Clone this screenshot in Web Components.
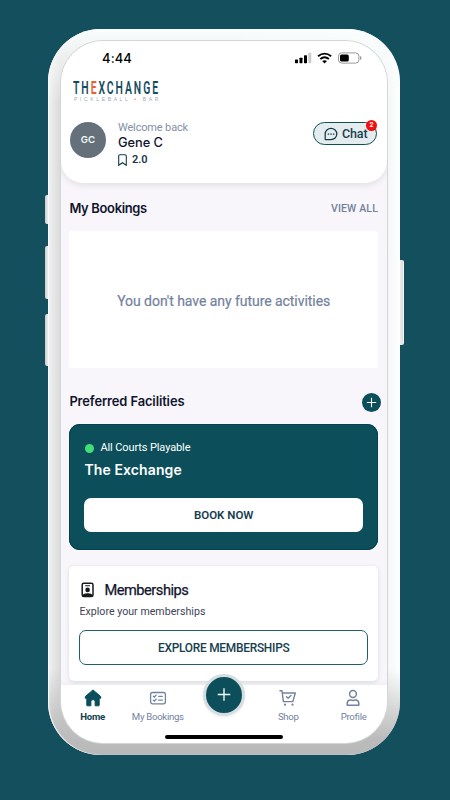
<!DOCTYPE html>
<html lang="en"><head><meta charset="utf-8"><title>The Exchange</title>
<style>
html,body{margin:0;height:100%;overflow:hidden}
body{background:#144f5d;font-family:Roboto,"Liberation Sans",sans-serif;color:#141a35;
--teal:#0c4f5b;--slate:#74819f;--head:Inter,"Open Sans",sans-serif}
</style></head><body>
<phone-frame>
  <app-header></app-header>
  <home-content></home-content>
  <tab-bar></tab-bar>
</phone-frame>
<script>
function define(name, html, after){
  const t=document.createElement('template'); t.innerHTML=html;
  customElements.define(name, class extends HTMLElement{
    connectedCallback(){
      if(this.shadowRoot) return;
      this.attachShadow({mode:'open'}).appendChild(t.content.cloneNode(true));
      if(after) after(this,this.shadowRoot);
    }
  });
}
/* One line of text tracked (or condensed) to a given width */
define('fit-text',`<style>:host{display:block;white-space:nowrap;flex:none}span{display:inline-block;transform-origin:0 50%}</style><span><slot></slot></span>`,(h,r)=>{
  const w=+h.getAttribute('w'), s=r.querySelector('span'), n=h.textContent.length;
  h.style.width=w+'px';
  const m=s.getBoundingClientRect().width;
  if(h.hasAttribute('condense')) s.style.transform='scaleX('+w/m+')';
  else s.style.letterSpacing=((w-m)/n)+'px';
});
define('section-title',`<style>:host{display:flex;align-items:center;justify-content:space-between;height:20px;font:600 12.9px/20px var(--head);color:#11142d}</style><slot></slot><slot name="action"></slot>`);
define('status-bar',`<style>:host{display:flex;justify-content:space-between;align-items:center;height:16px;padding:0 25px 0 41px;color:#000;font:500 13px/16px Inter,sans-serif}svg{display:block}</style>
<fit-text w="30">4:44</fit-text>
<svg width="68" height="14" viewBox="0 0 68 14"><g fill="#000"><rect x="1" y="8.6" width="3" height="3.6" rx=".6"/><rect x="5.5" y="6.7" width="3" height="5.5" rx=".6"/><rect x="10" y="4.3" width="3" height="7.9" rx=".6"/></g><rect x="14.3" y="1.8" width="3" height="10.4" rx=".6" fill="#ccc"/>
<g fill="none" stroke="#000" stroke-width="1.8"><path d="M24 5.3q6.6-5.4 13.2 0M26.3 8q4.3-3.5 8.6 0"/></g><path d="M28.2 10q2.4-1.7 4.8 0l-2.4 2.5z"/>
<rect x="44.5" y="1.9" width="20.4" height="10.2" rx="3.2" fill="none" stroke="#999"/><rect x="46" y="3.4" width="8.8" height="7.2" rx="1.6"/><path d="M66 5v4q1.5-.6 1.5-2T66 5" fill="#999"/></svg>`);
define('brand-logo',`<style>:host{display:block;width:86px;height:25px}
.a{font:600 18px/18px Roboto,sans-serif;letter-spacing:3.4px;color:#144c60;height:17px}.a b{color:#ee5d2b;font-weight:600}.c{font:400 5px/6px "Liberation Sans",sans-serif;color:#9ba7b0;margin-left:1px}.c b{color:#ee8a60}</style>
<fit-text class="a" w="87" condense>TH<b>E</b>XCHANGE</fit-text><fit-text class="c" w="87">PICKLEBALL <b>•</b> BAR</fit-text>`);
define('user-avatar',`<style>:host{width:36px;height:36px;border-radius:50%;background:#65707b;color:#f5f7f8;display:flex;align-items:center;justify-content:center;font:600 9.6px/12px var(--head)}</style><slot></slot>`);
define('chat-button',`<style>:host{box-sizing:border-box;display:flex;align-items:center;gap:4px;width:64px;height:23px;border:1px solid var(--teal);border-radius:12px;background:#e5ecee;padding-left:10px;position:relative;color:#173e51;font:500 12.5px/20px Roboto,sans-serif}i{position:absolute;right:-1px;top:-3.5px;width:11px;height:11px;border-radius:50%;background:#f60d0d;color:#fff;font:700 7px/11px Roboto;text-align:center}svg{flex:none}</style>
<svg width="14" height="14" viewBox="0 0 14 14"><path d="M1.2 12.6V7A5.8 5.6 0 1 1 7 12.6z" fill="none" stroke="#153b4a" stroke-width="1.25" stroke-linejoin="round"/><path d="M3.7 6.4h1.5v1.4H3.7zM6.3 6.4h1.5v1.4H6.3zM8.9 6.4h1.5v1.4H8.9z" fill="#153b4a"/></svg><fit-text w="25.5">Chat</fit-text><i>2</i>`);
define('app-header',`<style>:host{display:block;box-sizing:border-box;height:142px;padding-top:9px;background:#fff;border-radius:0 0 22px 22px;box-shadow:0 2px 7px #0000001a;position:relative;z-index:1;flex:none}
brand-logo{margin:13px 0 0 12px}.row{display:flex;align-items:flex-start;padding:17px 10px 0 9px}user-avatar{margin-top:1px}.who{flex:1;margin-left:12px}chat-button{margin-top:1px}
.w{font-size:11px;line-height:14px;color:#8390a8}.n{font:500 12.8px/16px var(--head);color:#11142d}.r{display:flex;align-items:center;gap:5px;height:17px;font:600 11px/16px Roboto;color:#17364c}</style>
<status-bar></status-bar><brand-logo></brand-logo>
<div class="row"><user-avatar>GC</user-avatar><div class="who"><fit-text class="w" w="70">Welcome back</fit-text><fit-text class="n" w="45">Gene C</fit-text>
<div class="r"><svg width="9" height="12" viewBox="0 0 9 12"><path d="M.7 11.3V2Q.7.7 2 .7h5Q8.3.7 8.3 2v9.3L4.5 8.7z" fill="none" stroke="#15394d" stroke-width="1.1"/></svg><fit-text w="15.5">2.0</fit-text></div></div><chat-button></chat-button></div>`);
define('empty-card',`<style>:host{display:flex;align-items:center;justify-content:center;height:137px;background:#fff;border-radius:3px;color:#73829e;font:400 14px/18px Roboto,sans-serif;-webkit-text-stroke:.2px #73829e;padding-top:3px;box-sizing:border-box}</style><slot></slot>`);
define('round-add',`<style>:host{display:flex;width:19px;height:19px;border-radius:50%;background:var(--teal);margin-right:-3px}</style><svg width="19" height="19" viewBox="0 0 19 19"><path d="M4.8 9.5h9.4M9.5 4.8v9.4" stroke="#f2f7f7" stroke-width="1.1"/></svg>`);
define('facility-card',`<style>:host{display:block;box-sizing:border-box;height:126px;border-radius:11px;background:var(--teal);box-shadow:inset 0 0 0 1px #05414f;padding:16px 15px;color:#fff}
.s{display:flex;align-items:center;gap:6px;height:16px;font:400 11px/16px Roboto}.s i{width:9px;height:9px;border-radius:50%;background:#41df78;margin-left:1px}.n{font:600 14px/20px var(--head);margin-top:4px}
.b{display:flex;align-items:center;justify-content:center;margin-top:18px;height:34px;border-radius:7px;background:#fff;color:#153e4e;font:600 11.5px/16px Roboto}</style>
<div class="s"><i></i><fit-text w="90">All Courts Playable</fit-text></div><fit-text class="n" w="97.5">The Exchange</fit-text><div class="b"><fit-text w="59.5">BOOK NOW</fit-text></div>`);
define('membership-card',`<style>:host{display:block;box-sizing:border-box;height:115px;border-radius:5px;background:#fff;box-shadow:0 1px 4px #26405c26;padding:14px 10px}
.t{display:flex;align-items:center;height:20px;gap:9px;padding-left:2px;font:400 14.6px/20px Roboto;-webkit-text-stroke:.25px #11142d;color:#11142d}.d{font:400 10.6px/16px Roboto;color:#3d4358;margin-top:4px}
.b{box-sizing:border-box;display:flex;align-items:center;justify-content:center;height:35px;margin-top:10px;border:1px solid #215e69;border-radius:7px;font:500 11.9px/16px Roboto;color:#153e4e}</style>
<div class="t"><svg width="14" height="16" viewBox="0 0 14 16"><rect x="1.2" y="1.2" width="10.8" height="13.4" rx="1.6" fill="none" stroke="#161a1c" stroke-width="1.5"/><path d="M4.2 3.7h4.8" stroke="#161a1c" stroke-width="1.1"/><circle cx="6.6" cy="7.9" r="2.3" fill="#161a1c"/><path d="M1.5 14.5v-1.8q5.1-2.8 10.2 0v1.8z" fill="#161a1c"/></svg><fit-text w="84">Memberships</fit-text></div>
<fit-text class="d" w="126">Explore your memberships</fit-text><div class="b"><fit-text w="131.5">EXPLORE MEMBERSHIPS</fit-text></div>`);
define('home-content',`<style>:host{display:flex;flex-direction:column;height:502px;flex:none;padding:16px 9px 0 8.4px;box-sizing:border-box;background:#f8f6fa}
.va{font:500 10.5px/20px Roboto;color:#73819b}empty-card{margin:12px 0 24px}facility-card{margin:12px 0 16px}</style>
<section-title><fit-text w="77.5">My Bookings</fit-text><fit-text slot="action" class="va" w="47">VIEW ALL</fit-text></section-title>
<empty-card><fit-text w="213">You don't have any future activities</fit-text></empty-card>
<section-title><fit-text w="115">Preferred Facilities</fit-text><round-add slot="action"></round-add></section-title>
<facility-card></facility-card><membership-card></membership-card>`);
define('tab-item',`<style>:host{display:flex;flex-direction:column;align-items:center;gap:4px;width:65.4px;color:var(--slate);font:400 9.6px/12px Roboto;margin-left:-1px;margin-right:1px}:host([active]){color:#123f50;font-weight:700}::slotted(svg){display:block}</style><slot name="icon"></slot><slot></slot>`);
define('create-button',`<style>:host{display:block;box-sizing:border-box;width:42px;height:42px;border:3px solid #d5dde0;border-radius:50%;background:var(--teal);box-shadow:0 1px 3px #6672;margin-top:-15px}svg{display:block}</style><svg width="36" height="36" viewBox="0 0 36 36"><path d="M11.7 17.5h12.6M18 11.2v12.6" stroke="#f6fafa" stroke-width="1.4"/></svg>`);
define('tab-bar',`<style>:host{display:block;height:58px;background:#fff;position:relative;z-index:2;box-shadow:0 -2px 5px #0000000b}.row{display:flex;height:46px;padding-top:4px;box-sizing:border-box}.mid{width:65.4px;display:flex;justify-content:center;align-items:flex-start}.home{width:118px;height:4px;border-radius:2px;background:#000;margin:4px 0 0 104px}create-button{width:42px;flex:none}</style>
<div class="row">
<tab-item active><svg slot="icon" width="18" height="18" viewBox="0 0 18 18"><path d="M9 .9L1.3 7.5v1.8h1.5v7q0 .5.5.5h3.6v-4.2q0-2 2.1-2t2.1 2v4.2h3.6q.5 0 .5-.5v-7h1.5V7.5z" fill="#0c4f5b" stroke="#0c4f5b" stroke-linejoin="round"/></svg><fit-text w="24.5">Home</fit-text></tab-item>
<tab-item><svg slot="icon" width="18" height="18" viewBox="0 0 18 18"><g fill="none" stroke="#74819f" stroke-width="1.3" stroke-linecap="round"><rect x="1.6" y="3.5" width="14.8" height="11.3" rx="2"/><path d="M4.4 7.2l1 .9 1.7-2M4.4 11.2l1 .9 1.7-2M9.7 7.3h3.6M9.7 11.2h3.6"/></g></svg><fit-text w="52">My Bookings</fit-text></tab-item>
<div class="mid"><create-button></create-button></div>
<tab-item><svg slot="icon" width="18" height="18" viewBox="0 0 18 18"><g fill="none" stroke="#74819f" stroke-width="1.4" stroke-linecap="round" stroke-linejoin="round"><path d="M1 1.8h2l1.4 10.8h9.4L16.3 4H3.4M7.5 7.7l1.6 1.5L12 6.4"/></g><g fill="#74819f"><circle cx="6" cy="15.7" r="1.1"/><circle cx="13.5" cy="15.7" r="1.1"/></g></svg><fit-text w="20.5">Shop</fit-text></tab-item>
<tab-item><svg slot="icon" width="18" height="18" viewBox="0 0 18 18"><g fill="none" stroke="#74819f" stroke-width="1.5" stroke-linejoin="round"><circle cx="9" cy="5" r="3.4"/><path d="M3.2 16.2v-1.7q0-3.6 3.5-3.6 2.3 1 4.6 0 3.5 0 3.5 3.6v1.7z"/></g></svg><fit-text w="25.5">Profile</fit-text></tab-item>
</div><div class="home"></div>`);
define('phone-frame',`<style>:host{display:block;position:relative;box-sizing:border-box;width:352px;height:726px;margin:29px 0 0 48px;padding:12px 13px;border-radius:53px;background:linear-gradient(90deg,#0000 0 50%,#f6f8f8 97%,#fff),linear-gradient(90deg,#f4f4f4,#e9e9e9 1.2%,#dadada 3.6%)}
:host::before{content:"";position:absolute;inset:0;border-radius:53px;background:linear-gradient(#fafdfd,#fafdfd00 75px),linear-gradient(#b8b8b800 640px,#bbb 710px,#b9b9b9);}
:host::after{content:"";position:absolute;inset:0;border-radius:53px;box-shadow:inset 1px 0 1px #fafafa;pointer-events:none}
.screen{position:relative;z-index:1;width:326px;height:702px;border-radius:42px;overflow:hidden;display:flex;flex-direction:column;background:#f8f6fa;box-shadow:0 0 0 1px #d3d6d7}
i{position:absolute;width:3px;background:linear-gradient(90deg,#ccc,#eee);border-radius:2px 0 0 2px;left:-3px}.r{left:352px;width:4px;background:linear-gradient(90deg,#eee,#ddd 60%,#fff);border-radius:0 2px 2px 0}</style>
<i style="top:166px;height:29px"></i><i style="top:217px;height:53px"></i><i style="top:285px;height:52px"></i><i class="r" style="top:231px;height:85px"></i><div class="screen"><slot></slot></div>`);
</script></body></html>
